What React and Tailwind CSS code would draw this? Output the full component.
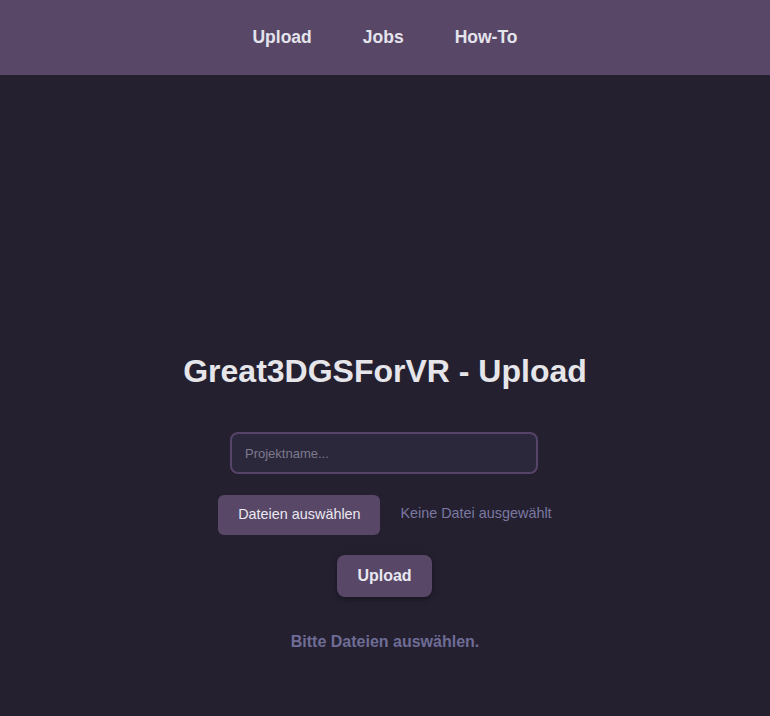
import { useState } from 'react';

// Top navigation links
const navItems = ['Upload', 'Jobs', 'How-To'];

export default function App() {
  const [projectName, setProjectName] = useState('');

  return (
    <div className="min-h-screen bg-[#242030] text-[#e2e2e8] font-['Liberation_Sans',Arial,sans-serif]">
      {/* Header */}
      <header className="h-[75px] bg-[#594767] flex items-center justify-center">
        <nav className="flex items-center gap-[51px]">
          {navItems.map((item) => (
            <a key={item} href="#" className="text-[17.5px] font-bold text-[#e4e4ec]">
              {item}
            </a>
          ))}
        </nav>
      </header>

      {/* Upload form */}
      <main className="flex flex-col items-center pt-[278px] pb-16">
        <h1 className="text-[32px] leading-[37px] font-bold text-[#e6e6ea]">Great3DGSForVR - Upload</h1>

        <input
          type="text"
          value={projectName}
          onChange={(e) => setProjectName(e.target.value)}
          placeholder="Projektname..."
          className="mt-[42px] w-[308px] h-[42px] -ml-[2px] px-[13px] rounded-lg border-2 border-[#554468] bg-[#2c283c] text-[13px] text-[#e2e2e8] placeholder:text-[#7d7a8c] outline-none"
        />

        <div className="mt-[21px] flex items-center gap-[20px]">
          <button className="w-[162px] h-[40px] rounded-md bg-[#594767] text-[14.4px] text-[#ebe9f0]">
            Dateien auswählen
          </button>
          <span className="text-[14.4px] text-[#7b79a0] -mt-[3px]">Keine Datei ausgewählt</span>
        </div>

        <button className="mt-[20px] w-[95px] h-[42px] -ml-[1px] rounded-lg bg-[#594767] text-[16px] font-bold text-[#e8e8f0] shadow-[0_2px_6px_rgba(0,0,0,0.35)]">
          Upload
        </button>

        <p className="mt-[36px] text-[16px] leading-[18px] font-bold text-[#6f6c96]">Bitte Dateien auswählen.</p>
      </main>
    </div>
  );
}
